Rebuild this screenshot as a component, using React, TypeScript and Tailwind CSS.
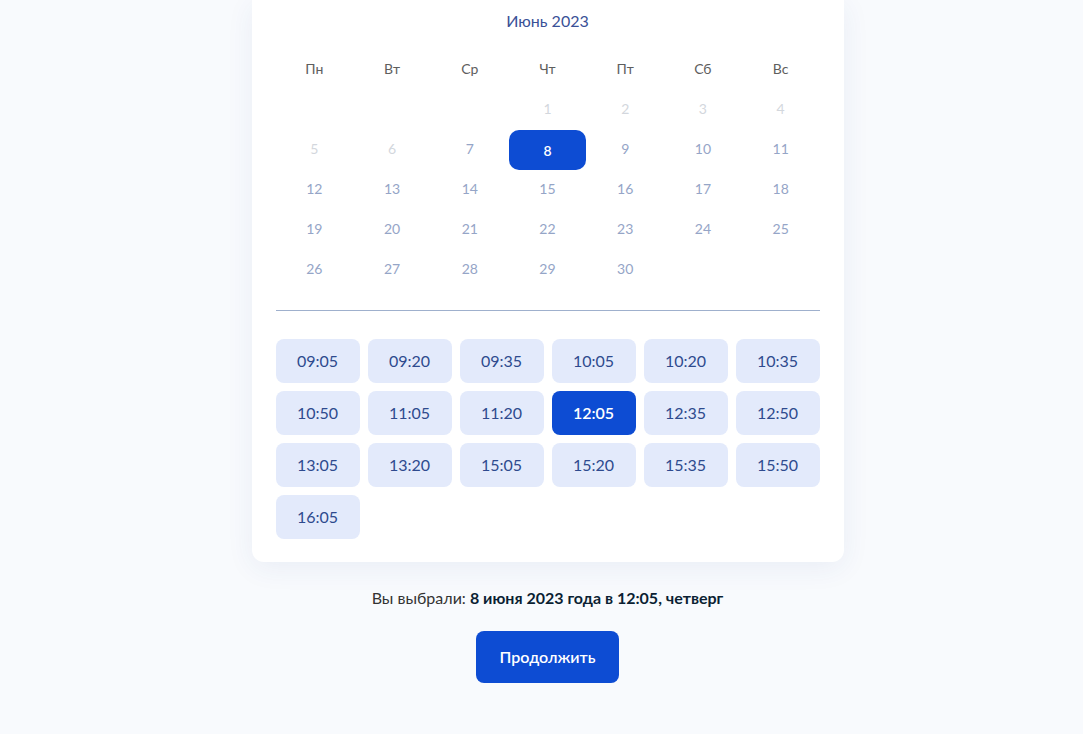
import React from "react";

const weekdays = ["Пн", "Вт", "Ср", "Чт", "Пт", "Сб", "Вс"];
const times = [
  "09:05", "09:20", "09:35", "10:05", "10:20", "10:35",
  "10:50", "11:05", "11:20", "12:05", "12:35", "12:50",
  "13:05", "13:20", "15:05", "15:20", "15:35", "15:50",
  "16:05",
];

export default function App() {
  const cells: (number | null)[] = [null, null, null];
  for (let d = 1; d <= 30; d++) cells.push(d);
  return (
    <div
      className="min-h-[734px] w-full bg-[#f8fafd] flex flex-col items-center pl-3"
      style={{ fontFamily: "Lato, 'Open Sans', sans-serif" }}
    >
      <div className="w-[592px] bg-white rounded-b-[12px] shadow-[0_6px_28px_rgba(40,70,140,0.07)] px-6 pt-[9px] pb-[23px]">
        <div className="h-6 flex items-center justify-center text-[16px] text-[#3a5197]">
          Июнь 2023
        </div>
        <div className="mt-[15px] grid grid-cols-7">
          {weekdays.map((w) => (
            <div key={w} className="h-10 flex items-center justify-center text-[14px] text-[#5e5e5e]">
              {w}
            </div>
          ))}
        </div>
        <div className="grid grid-cols-7">
          {cells.map((d, i) => {
            if (d === null) return <div key={i} className="h-10" />;
            const disabled = d <= 6;
            const selected = d === 8;
            return (
              <div key={i} className="h-10 flex items-center justify-center">
                {selected ? (
                  <div className="w-[77px] h-10 mt-[4px] rounded-[10px] bg-[#0d4cd3] text-white text-[14px] font-semibold flex items-center justify-center">
                    {d}
                  </div>
                ) : (
                  <span className={`text-[14px] ${disabled ? "text-[#d3d7dd]" : "text-[#95a5c7]"}`}>{d}</span>
                )}
              </div>
            );
          })}
        </div>
        <div className="mt-[22px] h-px bg-[#9fb0cd]" />
        <div className="mt-7 grid grid-cols-6 gap-2">
          {times.map((t) => {
            const sel = t === "12:05";
            return (
              <div
                key={t}
                className={`h-11 rounded-[8px] flex items-center justify-center text-[16px] ${
                  sel ? "bg-[#0d4cd3] text-white font-semibold" : "bg-[#e3eafb] text-[#2e4a8e]"
                }`}
              >
                {t}
              </div>
            );
          })}
        </div>
      </div>
      <div className="mt-6 h-6 flex items-center text-[16px] text-[#333333]">
        Вы выбрали:&nbsp;<span className="font-bold text-[#0b1f33]">8 июня 2023 года в 12:05, четверг</span>
      </div>
      <button className="mt-[21px] h-[52px] w-[143px] rounded-[8px] bg-[#0d4cd3] text-white text-[16px] font-semibold flex items-center justify-center">
        Продолжить
      </button>
    </div>
  );
}
